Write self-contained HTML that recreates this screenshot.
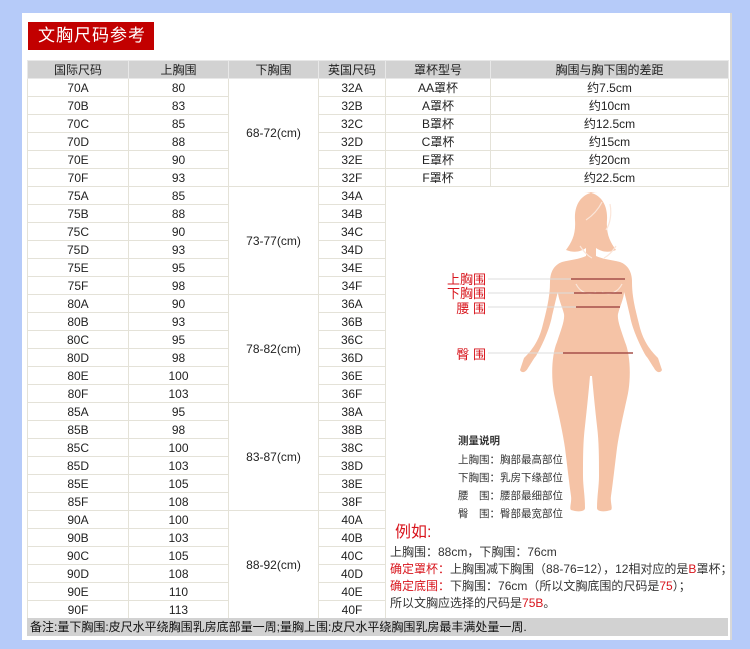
<!DOCTYPE html><html><head><meta charset="utf-8"><style>
*{margin:0;padding:0;box-sizing:border-box}
body{width:750px;height:649px;background:#b6cbf9;position:relative;overflow:hidden;font-family:"Liberation Sans","Noto Sans CJK SC",sans-serif;color:#222}
#panel{position:absolute;left:22px;top:13px;width:710px;height:627px;background:#fff;border-right:2px solid #d8d8d8}
#title{position:absolute;left:28px;top:22px;width:126px;height:28px;background:#c20000;color:#fff;font-size:17px;line-height:28px;padding-left:10px;letter-spacing:1px}
table{position:absolute;left:27px;top:60px;border-collapse:collapse;table-layout:fixed;font-size:12px}
td,th{border:1px solid #e4e2d8;height:18px;text-align:center;font-weight:normal;padding:0;line-height:16px}
th{background:#d2d2d2;border-color:#e8e8e8}
#foot{position:absolute;left:27px;top:618px;width:701px;height:18px;background:#d2d2d2;font-size:12px;line-height:18px;padding-left:3px;color:#111}
.r{color:#d8141c}
#ex{position:absolute;left:390px;top:522px;font-size:12px;line-height:17px;color:#333}
</style></head><body>
<div id="panel"></div>
<div id="title">文胸尺码参考</div>
<table>
<colgroup><col style="width:101px"><col style="width:100px"><col style="width:90px"><col style="width:67px"><col style="width:105px"><col style="width:238px"></colgroup>
<tr><th>国际尺码</th><th>上胸围</th><th>下胸围</th><th>英国尺码</th><th>罩杯型号</th><th>胸围与胸下围的差距</th></tr>
<tr><td>70A</td><td>80</td><td rowspan="6">68-72(cm)</td><td>32A</td><td>AA罩杯</td><td>约7.5cm</td></tr>
<tr><td>70B</td><td>83</td><td>32B</td><td>A罩杯</td><td>约10cm</td></tr>
<tr><td>70C</td><td>85</td><td>32C</td><td>B罩杯</td><td>约12.5cm</td></tr>
<tr><td>70D</td><td>88</td><td>32D</td><td>C罩杯</td><td>约15cm</td></tr>
<tr><td>70E</td><td>90</td><td>32E</td><td>E罩杯</td><td>约20cm</td></tr>
<tr><td>70F</td><td>93</td><td>32F</td><td>F罩杯</td><td>约22.5cm</td></tr>
<tr><td>75A</td><td>85</td><td rowspan="6">73-77(cm)</td><td>34A</td><td colspan="2" rowspan="24" style="border:none"></td></tr>
<tr><td>75B</td><td>88</td><td>34B</td></tr>
<tr><td>75C</td><td>90</td><td>34C</td></tr>
<tr><td>75D</td><td>93</td><td>34D</td></tr>
<tr><td>75E</td><td>95</td><td>34E</td></tr>
<tr><td>75F</td><td>98</td><td>34F</td></tr>
<tr><td>80A</td><td>90</td><td rowspan="6">78-82(cm)</td><td>36A</td></tr>
<tr><td>80B</td><td>93</td><td>36B</td></tr>
<tr><td>80C</td><td>95</td><td>36C</td></tr>
<tr><td>80D</td><td>98</td><td>36D</td></tr>
<tr><td>80E</td><td>100</td><td>36E</td></tr>
<tr><td>80F</td><td>103</td><td>36F</td></tr>
<tr><td>85A</td><td>95</td><td rowspan="6">83-87(cm)</td><td>38A</td></tr>
<tr><td>85B</td><td>98</td><td>38B</td></tr>
<tr><td>85C</td><td>100</td><td>38C</td></tr>
<tr><td>85D</td><td>103</td><td>38D</td></tr>
<tr><td>85E</td><td>105</td><td>38E</td></tr>
<tr><td>85F</td><td>108</td><td>38F</td></tr>
<tr><td>90A</td><td>100</td><td rowspan="6">88-92(cm)</td><td>40A</td></tr>
<tr><td>90B</td><td>103</td><td>40B</td></tr>
<tr><td>90C</td><td>105</td><td>40C</td></tr>
<tr><td>90D</td><td>108</td><td>40D</td></tr>
<tr><td>90E</td><td>110</td><td>40E</td></tr>
<tr><td>90F</td><td>113</td><td>40F</td></tr>
</table>
<svg style="position:absolute;left:380px;top:180px" width="350" height="350" viewBox="0 0 350 350">
<g fill="#f5c3a6">
<path d="M218 12c-16 0-24 12-23 28 1 14-3 22-9 30 8 3 14 2 20-2l0 8c-6 3-16 4-24 6-8 3-12 10-12 20 0 16-4 30-8 46-4 14-10 22-18 30l-4 12c2 4 6 2 8-2 4-6 6-10 8-12 6-10 14-28 16-40 2-8 4-18 6-24 0 6 4 14 6 22 1 6 -3 16-7 28-6 14-6 40-2 56 4 18 8 36 10 50 2 16 4 34 6 48 1 6-2 12 0 14 6 2 14 2 14-2 0-12-2-22-2-32 0-18 0-34 2-50 2-18 4-38 5-50h2c1 12 3 32 5 50 2 16 2 32 2 50 0 10-2 20-2 32 0 4 8 4 14 2 2-2-1-8 0-14 2-14 4-32 6-48 2-14 6-32 10-50 4-16 4-42-2-56-4-12-8-22-7-28 2-8 6-16 6-22 2 6 4 16 6 24 2 12 10 30 16 40 2 2 4 6 8 12 2 4 6 6 8 2l-4-12c-8-8-14-16-18-30-4-16-8-30-8-46 0-10-4-17-12-20-8-2-18-3-24-6l0-8c6 4 12 5 20 2-6-8-10-16-9-30 1-16-7-28-23-28z"/>
</g>
<g fill="none" stroke="#fbe6da" stroke-width="1.2"><path d="M206 40c6-4 12-10 16-18M230 24c2 10 0 20-4 26M200 66c4 6 8 10 12 12M236 66c-4 6-8 10-12 12"/><path d="M196 104c4 8 12 12 20 8M222 112c8 4 16 0 20-8"/></g>
<g stroke="#dcdcdc" stroke-width="1"><line x1="108" y1="99" x2="195" y2="99"/><line x1="108" y1="113" x2="200" y2="113"/><line x1="108" y1="127" x2="200" y2="127"/><line x1="108" y1="173" x2="188" y2="173"/></g>
<g stroke="#a5504a" stroke-width="1.5"><line x1="191" y1="99" x2="245" y2="99"/><line x1="194" y1="113" x2="242" y2="113"/><line x1="196" y1="127" x2="240" y2="127"/><line x1="183" y1="173" x2="253" y2="173"/></g>
<g fill="#d8141c" font-size="13" font-family="Liberation Sans,Noto Sans CJK SC,sans-serif" text-anchor="end"><text x="106" y="104">上胸围</text><text x="106" y="118">下胸围</text><text x="106" y="133">腰 围</text><text x="106" y="179">臀 围</text></g>
<g fill="#333" font-size="10.5" font-family="Liberation Sans,Noto Sans CJK SC,sans-serif"><text x="78" y="264" font-weight="bold">测量说明</text><text x="78" y="283">上胸围：胸部最高部位</text><text x="78" y="301">下胸围：乳房下缘部位</text><text x="78" y="319">腰　围：腰部最细部位</text><text x="78" y="337">臀　围：臀部最宽部位</text></g>
</svg>
<div id="ex"><div class="r" style="font-size:16px;line-height:22px;padding-left:5px">例如:</div>
<div>上胸围：88cm，下胸围：76cm</div>
<div><span class="r">确定罩杯：</span>上胸围减下胸围（88-76=12），12相对应的是<span class="r">B</span>罩杯；</div>
<div><span class="r">确定底围：</span>下胸围：76cm（所以文胸底围的尺码是<span class="r">75</span>）；</div>
<div>所以文胸应选择的尺码是<span class="r">75B</span>。</div></div>
<div id="foot">备注:量下胸围:皮尺水平绕胸围乳房底部量一周;量胸上围:皮尺水平绕胸围乳房最丰满处量一周.</div>
</body></html>
